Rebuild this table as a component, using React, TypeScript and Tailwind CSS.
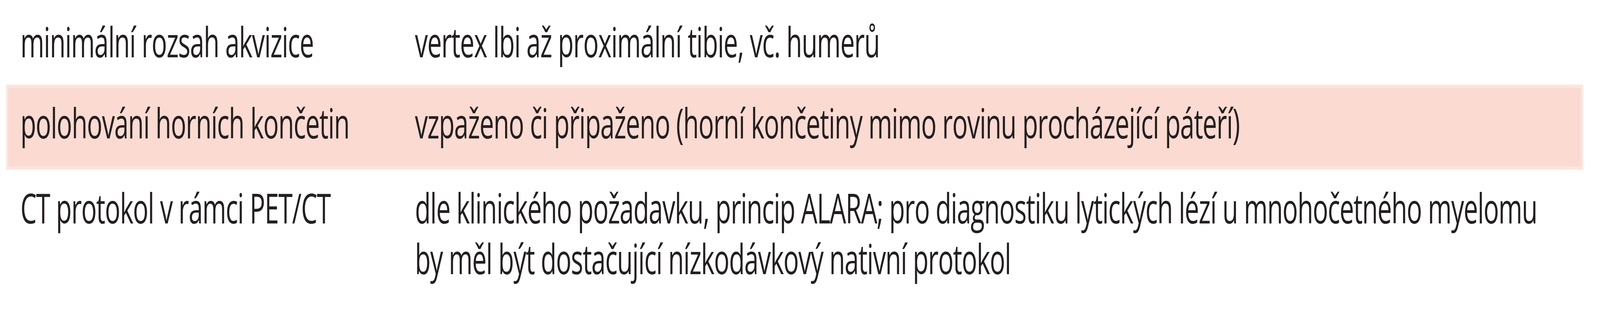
import { useEffect, useState } from "react";

const DESIGN_W = 6574;

function fitScale() {
  if (typeof window === "undefined") return 1;
  return Math.min(1, window.innerWidth / DESIGN_W);
}

type RowProps = {
  label: string;
  lines: string[];
  className: string;
};

function Row({ label, lines, className }: RowProps) {
  return (
    <div className={`grid grid-cols-[1671px_1fr] border-[8px] ${className}`}>
      <div className="pl-[50px] whitespace-nowrap">{label}</div>
      <div>
        {lines.map((l) => (
          <div key={l} className="whitespace-nowrap">
            {l}
          </div>
        ))}
      </div>
    </div>
  );
}

export default function App() {
  // the design is 6574px wide; fit it to the real window width if the browser caps it
  const [sx, setSx] = useState(fitScale);
  useEffect(() => {
    const f = () => setSx(fitScale());
    f();
    window.addEventListener("resize", f);
    return () => window.removeEventListener("resize", f);
  }, []);

  return (
    <div className="w-full h-[800px] overflow-hidden bg-white">
      <div
        className="w-[6574px] h-[800px] origin-top-left text-[#231f20] font-['Open_Sans',sans-serif] text-[106px] leading-[130px] tracking-[-2.2px]"
        style={{ transform: `scaleX(${sx})` }}
      >
        <div className="ml-[26px] w-[6478px]">
          <Row
            label="minimální rozsah akvizice"
            lines={["vertex lbi až proximální tibie, vč. humerů"]}
            className="h-[217px] border-transparent pt-[33px]"
          />
          <Row
            label="polohování horních končetin"
            lines={["vzpaženo či připaženo (horní končetiny mimo rovinu procházející páteří)"]}
            className="h-[218px] border-[#fde5de] bg-[#fbdbd1] pt-[24px]"
          />
          <Row
            label="CT protokol v rámci PET/CT"
            lines={[
              "dle klinického požadavku, princip ALARA; pro diagnostiku lytických lézí u mnohočetného myelomu",
              "by měl být dostačující nízkodávkový nativní protokol",
            ]}
            className="border-transparent pt-[24px]"
          />
        </div>
      </div>
    </div>
  );
}
